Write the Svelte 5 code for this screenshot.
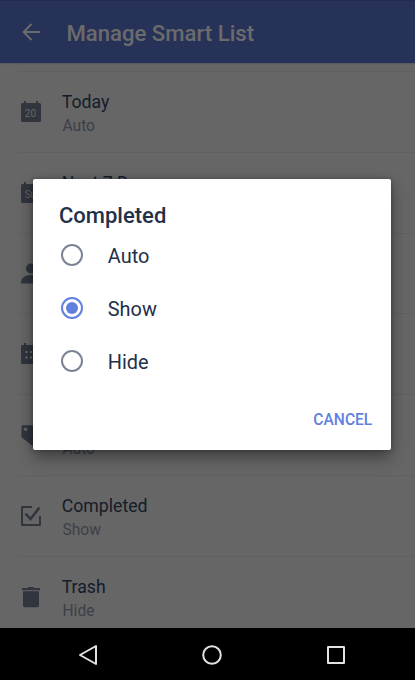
<script>
  const rows = [
    { title: 'Today', state: 'Auto', icon: 'today' },
    { title: 'Next 7 Days', state: '', icon: 'week' },
    { title: '', state: '', icon: 'person' },
    { title: '', state: '', icon: 'calendar' },
    { title: '', state: 'Auto', icon: 'tag' },
    { title: 'Completed', state: 'Show', icon: 'check' },
    { title: 'Trash', state: 'Hide', icon: 'trash' }
  ];
  const options = ['Auto', 'Show', 'Hide'];
  let selected = $state('Show');
</script>

<div class="screen">
  <header>
    <svg class="back" width="20" height="20" viewBox="0 0 20 20"><path d="M19 10H3M10.500 2 2.600 10l7.900 8" fill="none" stroke="currentColor" stroke-width="2" /></svg>
    <h1>Manage Smart List</h1>
  </header>
  <main>
    {#each rows as row}
      <div class="row">
        <svg class="icon" width="22" height="24" viewBox="0 0 22 24">
          {#if row.icon === 'today' || row.icon === 'week'}
            <path d="M4 1h2v2h10V1h2v2h1.500a1.500 1.500 0 0 1 1.500 1.500v16a1.500 1.500 0 0 1-1.500 1.500h-17A1.500 1.500 0 0 1 1 20.500V4.500A1.500 1.500 0 0 1 2.500 3H4z" />
            <text x="10.400" y="16.700" text-anchor="middle">{row.icon === 'today' ? '20' : 'Su'}</text>
          {:else if row.icon === 'person'}
            <circle cx="11" cy="6.500" r="5" /><path d="M1 21.500v-1c0-4.500 4-7.500 10-7.500s10 3 10 7.500v1z" />
          {:else if row.icon === 'calendar'}
            <path d="M4 1h2v2h10V1h2v2h1.500a1.500 1.500 0 0 1 1.500 1.500v16a1.500 1.500 0 0 1-1.500 1.500h-17A1.500 1.500 0 0 1 1 20.500V4.500A1.500 1.500 0 0 1 2.500 3H4z" />
            <g class="dots"><circle cx="6.500" cy="10" r="1.200" /><circle cx="11" cy="10" r="1.200" /><circle cx="15.500" cy="10" r="1.200" /><circle cx="6.500" cy="15.500" r="1.200" /><circle cx="11" cy="15.500" r="1.200" /></g>
          {:else if row.icon === 'tag'}
            <path d="M2.800 2.200H12l10 10-9 11-11.500-9V3.500a1.300 1.300 0 0 1 1.300-1.300z" /><circle class="hole" cx="5.500" cy="6.200" r="1.700" />
          {:else if row.icon === 'check'}
            <path class="line" d="M12 3H2v18h18V12" /><path class="line tick" d="m5.500 9.500 5 5.500L19.500 3.500" />
          {:else}
            <path d="M2 3h5.500l1-1h5l1 1H20v2.200H2zM3 6.200h16v14.300a1.700 1.700 0 0 1-1.700 1.700H4.700A1.700 1.700 0 0 1 3 20.500z" />
          {/if}
        </svg>
        <div class="copy">
          <div class="name">{row.title}</div>
          <div class="state">{row.state}</div>
        </div>
      </div>
    {/each}
  </main>
  <nav>
    <svg width="22" height="24" viewBox="0 0 22 24"><path d="M19 3v18L3 12z" /></svg>
    <svg width="22" height="24" viewBox="0 0 22 24"><circle cx="11" cy="12" r="8.800" /></svg>
    <svg width="22" height="24" viewBox="0 0 22 24"><path d="M3 4h16v16H3z" /></svg>
  </nav>

  <section class="dialog" role="dialog" aria-label="Completed">
    <h2>Completed</h2>
    {#each options as option}
      <button class="option" onclick={() => (selected = option)}>
        <span class="radio" class:on={selected === option}></span>
        <span>{option}</span>
      </button>
    {/each}
    <button class="cancel">CANCEL</button>
  </section>
</div>

<style>
  :global(body) { background: #000; }
  .screen {
    position: relative;
    display: flex;
    flex-direction: column;
    width: 415px;
    height: 680px;
    overflow: hidden;
    background: #666;
    font-family: Roboto, sans-serif;
  }
  header {
    display: flex;
    align-items: center;
    gap: 25.400px;
    flex: none;
    box-sizing: border-box;
    height: 63px;
    padding: 0 0 0 21px;
    background: #273259;
    border-top: 1px solid #222c4d;
    box-shadow: 0 1px 1px #5a5b60;
    color: #6b6b6b;
  }
  h1 { margin: 2px 0 0; font-size: 22.150px; font-weight: 500; line-height: 28px; white-space: nowrap; }
  main { flex: 1; min-height: 0; padding-top: 8px; overflow: hidden; }
  .row {
    display: flex;
    box-sizing: border-box;
    height: 80.800px;
    margin-left: 18px;
    padding-left: 2px;
    border-top: 1px solid #606060;
  }
  .icon { flex: none; margin-top: 28px; fill: #30353e; }
  .icon text { fill: #666; font-size: 10px; }
  .icon .dots, .icon .hole { fill: #666; }
  .icon .line { fill: none; stroke: #30353e; stroke-width: 2; stroke-linejoin: round; }
  .icon .tick { stroke-width: 2.600; stroke-linejoin: miter; }
  .copy { margin-left: 19.700px; padding-top: 18px; }
  .name { min-height: 24px; color: #141c2a; font-size: 17.700px; line-height: 24px; }
  .state { margin-left: .8px; padding-top: 1px; color: #3b4048; font-size: 15.600px; line-height: 22px; }
  nav {
    display: flex;
    justify-content: space-between;
    align-items: center;
    flex: none;
    box-sizing: border-box;
    height: 52px;
    padding: 1px 68.500px 0 77px;
    background: #000;
  }
  nav svg { fill: none; stroke: #e2e2e2; stroke-width: 2; stroke-linejoin: round; }
  .dialog {
    position: absolute;
    top: 179px;
    left: 32.500px;
    display: flex;
    flex-direction: column;
    box-sizing: border-box;
    width: 358.800px;
    height: 270.500px;
    padding: 22px 19px 16.500px 26.500px;
    border-radius: 2px;
    background: #fff;
    box-shadow: 0 7px 16px rgba(0, 0, 0, .4), 0 0 5px rgba(0, 0, 0, .25);
    color: #22304a;
  }
  h2 { margin: 0 0 1px; padding-top: .5px; font-size: 22px; font-weight: 500; line-height: 28px; }
  button { margin: 0; padding: 0; border: 0; background: none; font-family: inherit; }
  .option {
    display: flex;
    align-items: center;
    gap: 25px;
    flex: none;
    height: 53px;
    color: inherit;
    font-size: 19.900px;
    text-align: left;
  }
  .option:first-of-type { margin-top: -.5px; }
  .radio {
    display: grid;
    place-items: center;
    box-sizing: border-box;
    width: 22px;
    height: 22px;
    margin: -3.500px 0 0 1.800px;
    border: 2px solid #7b8495;
    border-radius: 50%;
  }
  .radio.on { border-color: #617fdf; }
  .radio.on::after { content: ''; width: 12px; height: 12px; border-radius: 50%; background: #617fdf; }
  .cancel { align-self: flex-end; margin-top: auto; color: #617fdf; font-size: 15.600px; font-weight: 500; line-height: 26px; }
</style>
